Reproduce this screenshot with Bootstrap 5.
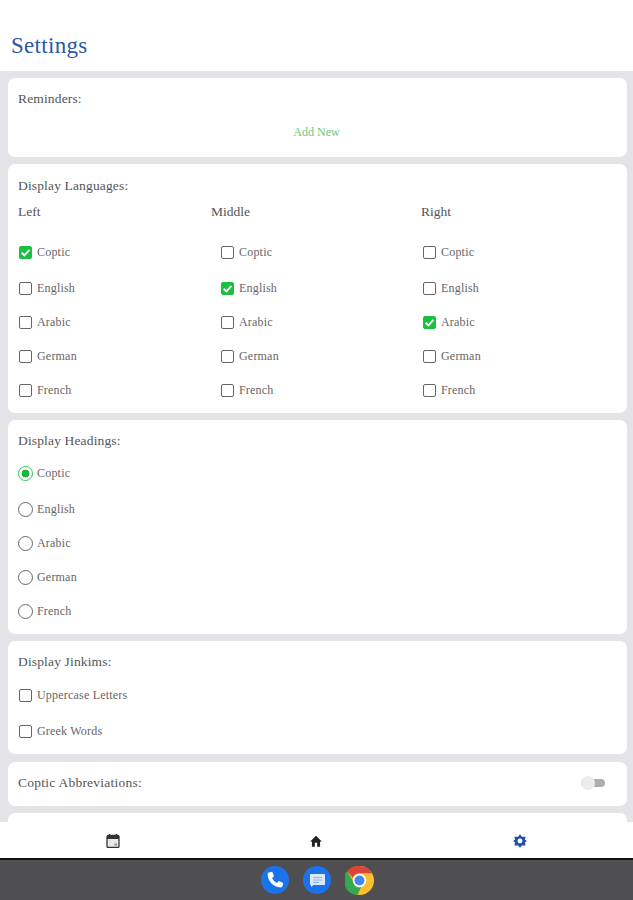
<!DOCTYPE html>
<html lang="en">
<head>
<meta charset="utf-8">
<title>Settings</title>
<link href="https://cdn.jsdelivr.net/npm/bootstrap@5.3.0/dist/css/bootstrap.min.css" rel="stylesheet">
<style>
html,body{height:100%;margin:0;overflow:hidden}
body{font-family:"Liberation Serif",serif;color:#555;background:#e4e4e8}
.shell{height:900px}
.topbar{height:71px;background:#fff;padding:31px 0 0 11px}
.topbar h1{font-size:23px;line-height:29px;margin:0;color:#2a57a5;font-weight:400;font-family:"Liberation Serif",serif;letter-spacing:.3px}
.scroller{padding:7px 6px 0 8px;gap:7px;overflow:hidden;min-height:0}
.panel{border:0;border-radius:7px;flex:none;padding:0 10px}
.p-rem{height:79px}
.p-lang{height:249px}
.p-head{height:214px}
.p-jink{height:113px}
.p-abbr{height:44px;margin-top:1px}
.p-next{height:40px}
.ttl{font-size:13.5px;line-height:18px;color:#555;letter-spacing:.15px}
.p-rem .ttl{margin-top:12px}
.addnew{font-size:12px;line-height:14px;color:#6cc77c;text-align:center;margin-top:17px;padding-right:2px}
.p-lang .ttl{margin-top:13px}
.p-head .ttl,.p-jink .ttl{margin-top:12px}
.heads{display:grid;grid-template-columns:193px 210px 1fr;font-size:13.5px;line-height:18px;margin-top:8px}
.cols{display:grid;grid-template-columns:202px 202px 1fr;margin-top:12px}
.opt{display:flex;align-items:center;height:34px;padding-left:1px;font-size:12px;color:#666;letter-spacing:.2px}
.opt.first{height:38px}
.box{appearance:none;width:13px;height:13px;border:1.5px solid #666;border-radius:2px;margin:0 5px 0 0;flex:none;background:#fff;display:block}
.box:checked{background:#19c13f url("data:image/svg+xml,%3Csvg xmlns='http://www.w3.org/2000/svg' viewBox='0 0 12 12'%3E%3Cpath d='M2.500 6.200 5 8.600l4.600-5' fill='none' stroke='%23fff' stroke-width='1.700'/%3E%3C/svg%3E") center/13px no-repeat;border-color:#19c13f}
.rad{appearance:none;width:15px;height:15px;border:1.4px solid #666;border-radius:50%;margin:0 4px 0 -1px;flex:none;background:#fff;display:block}
.rad:checked{border-color:#35c659;background:radial-gradient(circle,#12b83a 0 3.6px,#fff 4.2px)}
.p-head .radios{margin-top:4px}
.p-jink .radios{margin-top:5px}
.abbr-row{height:42px;padding-right:12px}
.abbr-row .ttl{letter-spacing:.25px}
.togl{position:relative;width:24px;height:8px;background:#aeaeae;border-radius:5px;flex:none}
.togl::after{content:"";position:absolute;left:0;top:-3px;width:14px;height:14px;border-radius:50%;background:#ececec}
.tabs{height:38px;background:#fff;flex:none;border-bottom:2px solid #111;padding:2px 11px 0}
.tabs>div{width:33.33%;display:flex;justify-content:center;align-items:center}
.dock{height:40px;background:#4f4f51;flex:none;gap:14px;padding-left:2px}
.dot{width:28px;height:28px;display:block}
.dot-lg{width:29px;height:29px;display:block}
</style>
</head>
<body>
<div class="shell d-flex flex-column">
  <div class="topbar flex-shrink-0"><h1>Settings</h1></div>
  <div class="scroller d-flex flex-column flex-grow-1">
    <div class="card panel p-rem">
      <div class="ttl">Reminders:</div>
      <div class="addnew">Add New</div>
    </div>
    <div class="card panel p-lang">
      <div class="ttl">Display Languages:</div>
      <div class="heads"><div>Left</div><div>Middle</div><div>Right</div></div>
      <div class="cols">
        <div>
          <label class="opt first"><input class="box" type="checkbox" checked>Coptic</label>
          <label class="opt"><input class="box" type="checkbox">English</label>
          <label class="opt"><input class="box" type="checkbox">Arabic</label>
          <label class="opt"><input class="box" type="checkbox">German</label>
          <label class="opt"><input class="box" type="checkbox">French</label>
        </div>
        <div>
          <label class="opt first"><input class="box" type="checkbox">Coptic</label>
          <label class="opt"><input class="box" type="checkbox" checked>English</label>
          <label class="opt"><input class="box" type="checkbox">Arabic</label>
          <label class="opt"><input class="box" type="checkbox">German</label>
          <label class="opt"><input class="box" type="checkbox">French</label>
        </div>
        <div>
          <label class="opt first"><input class="box" type="checkbox">Coptic</label>
          <label class="opt"><input class="box" type="checkbox">English</label>
          <label class="opt"><input class="box" type="checkbox" checked>Arabic</label>
          <label class="opt"><input class="box" type="checkbox">German</label>
          <label class="opt"><input class="box" type="checkbox">French</label>
        </div>
      </div>
    </div>
    <div class="card panel p-head">
      <div class="ttl">Display Headings:</div>
      <div class="radios">
        <label class="opt first"><input class="rad" type="radio" name="h" checked>Coptic</label>
        <label class="opt"><input class="rad" type="radio" name="h">English</label>
        <label class="opt"><input class="rad" type="radio" name="h">Arabic</label>
        <label class="opt"><input class="rad" type="radio" name="h">German</label>
        <label class="opt"><input class="rad" type="radio" name="h">French</label>
      </div>
    </div>
    <div class="card panel p-jink">
      <div class="ttl">Display Jinkims:</div>
      <div class="radios">
        <label class="opt first"><input class="box" type="checkbox">Uppercase Letters</label>
        <label class="opt"><input class="box" type="checkbox">Greek Words</label>
      </div>
    </div>
    <div class="card panel p-abbr">
      <div class="abbr-row d-flex align-items-center justify-content-between">
        <div class="ttl">Coptic Abbreviations:</div>
        <div class="togl"></div>
      </div>
    </div>
    <div class="card panel p-next"></div>
  </div>
  <div class="tabs d-flex">
    <div><svg width="14" height="14" viewBox="0 0 14 14"><path d="M3.500 0v2M10.500 0v2" stroke="#333" stroke-width="1.400"/><rect x="1" y="1.500" width="12" height="12" rx="1.300" fill="#e8e8e8" stroke="#333" stroke-width="1.300"/><rect x="1" y="1.500" width="12" height="3.500" fill="#333"/><path d="M8.500 9.500h2.500v2H8.500z" fill="#888"/></svg></div>
    <div><svg width="14" height="14" viewBox="0 0 24 24"><path d="M10 22v-7h4v7h5v-9h3L12 3 2 13h3v9z" fill="#222"/></svg></div>
    <div><svg width="14" height="14" viewBox="0 0 24 24"><path fill-rule="evenodd" fill="#1f4fa6" d="M12 .5l3.200 4h6.300l-1 5.500L24 12l-3.500 2 1 5.500h-6.300l-3.200 4-3.200-4H2.500l1-5.500L0 12l3.500-2-1-5.500h6.300zM12 7.800a4.200 4.200 0 1 0 0 8.400 4.200 4.200 0 0 0 0-8.400z"/></svg></div>
  </div>
  <div class="dock d-flex justify-content-center align-items-center">
    <svg class="dot" viewBox="0 0 28 28"><circle cx="14" cy="14" r="14" fill="#1a73e8"/><path d="M8 6.500l3.200-.7 1.900 4.500-2 1.800c1 2.300 2.600 3.900 4.800 4.900l1.800-2 4.500 1.900-.7 3.200c-.2.900-1 1.500-2 1.400C12.500 21 7 15.500 6.600 8.500c-.1-1 .5-1.800 1.400-2z" fill="#fff"/></svg>
    <svg class="dot" viewBox="0 0 28 28"><circle cx="14" cy="14" r="14" fill="#1a73e8"/><path d="M7 8h14c.6 0 1 .4 1 1v9c0 .6-.4 1-1 1H10.500L8 21v-2h-.2c-.5 0-.8-.4-.8-1z" fill="#dbe7fb"/><path d="M10 11.500h9M10 14h9M10 16.500h6" stroke="#8fb6f3" stroke-width="1"/></svg>
    <svg class="dot-lg" viewBox="0 0 28 28"><circle cx="14" cy="14" r="14" fill="#fbc02d"/><path d="M14 0a14 14 0 0 1 12.100 7H14a7 7 0 0 0-6.500 4.400L2 4.800A14 14 0 0 1 14 0z" fill="#db4437"/><path d="M2 4.800l5.800 10A7 7 0 0 0 15.500 20.800l-3.500 7A14 14 0 0 1 2 4.800z" fill="#34a853"/><circle cx="14" cy="14" r="6.400" fill="#fff"/><circle cx="14" cy="14" r="4.800" fill="#4285f4"/></svg>
  </div>
</div>
</body>
</html>
